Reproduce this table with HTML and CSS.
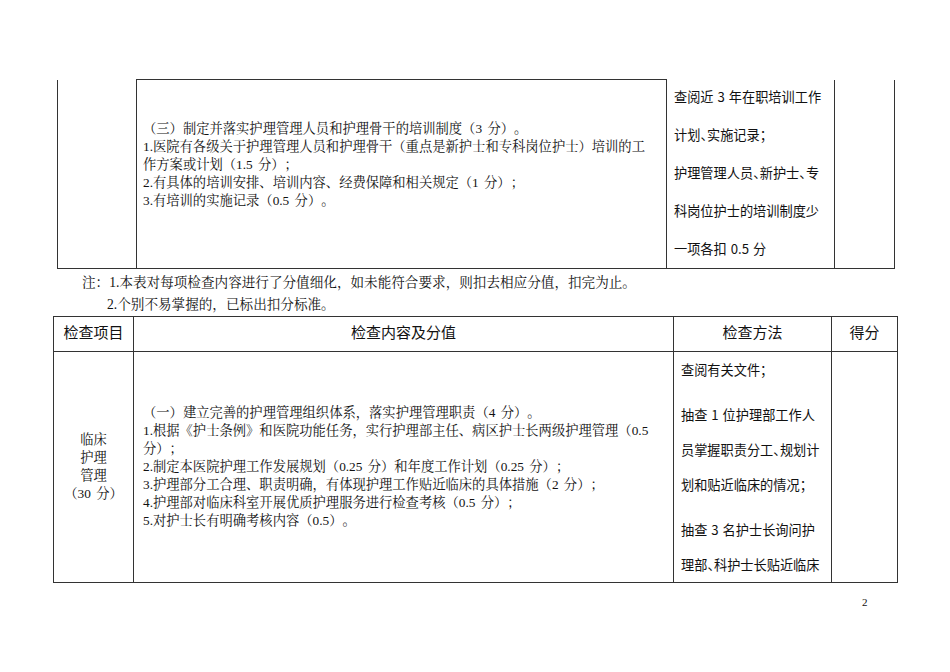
FILE: index.html
```html
<!DOCTYPE html>
<html lang="zh-CN">
<head>
<meta charset="utf-8">
<title>护理管理检查表</title>
<link rel="stylesheet" href="styles.css">
</head>
<body>
<div class="page">
  <table class="tbl tbl-top">
    <colgroup>
      <col class="c1a"><col class="c2a"><col class="c3a"><col class="c4a">
    </colgroup>
    <tr class="row-top">
      <td class="cell-item"></td>
      <td class="cell-content content-top">
        <div class="ln">（三）制定并落实护理管理人员和护理骨干的培训制度（3 分）。</div>
        <div class="ln">1.医院有各级关于护理管理人员和护理骨干（重点是新护士和专科岗位护士）培训的工</div>
        <div class="ln">作方案或计划（1.5 分）；</div>
        <div class="ln">2.有具体的培训安排、培训内容、经费保障和相关规定（1 分）；</div>
        <div class="ln">3.有培训的实施记录（0.5 分）。</div>
      </td>
      <td class="cell-method method-top">
        <div class="mln">查阅近 3 年在职培训工作</div>
        <div class="mln">计划<span class="hw">、</span>实施记录；</div>
        <div class="mln">护理管理人员<span class="hw">、</span>新护士<span class="hw">、</span>专</div>
        <div class="mln">科岗位护士的培训制度少</div>
        <div class="mln">一项各扣 0.5 分</div>
      </td>
      <td class="cell-score"></td>
    </tr>
  </table>

  <div class="notes">
    <div class="note">注：1.本表对每项检查内容进行了分值细化，如未能符合要求，则扣去相应分值，扣完为止。</div>
    <div class="note note2">2.个别不易掌握的，已标出扣分标准。</div>
  </div>

  <table class="tbl tbl-bottom">
    <colgroup>
      <col class="c1b"><col class="c2b"><col class="c3b"><col class="c4b">
    </colgroup>
    <tr class="row-head">
      <th>检查项目</th>
      <th>检查内容及分值</th>
      <th>检查方法</th>
      <th>得分</th>
    </tr>
    <tr class="row-body">
      <td class="cell-item item-bottom">
        <div class="ln">临床</div>
        <div class="ln">护理</div>
        <div class="ln">管理</div>
        <div class="ln">（30 分）</div>
      </td>
      <td class="cell-content content-bottom">
        <div class="ln">（一）建立完善的护理管理组织体系，落实护理管理职责（4 分）。</div>
        <div class="ln">1.根据《护士条例》和医院功能任务，实行护理部主任、病区护士长两级护理管理（0.5</div>
        <div class="ln">分）；</div>
        <div class="ln">2.制定本医院护理工作发展规划（0.25 分）和年度工作计划（0.25 分）；</div>
        <div class="ln">3.护理部分工合理、职责明确，有体现护理工作贴近临床的具体措施（2 分）；</div>
        <div class="ln">4.护理部对临床科室开展优质护理服务进行检查考核（0.5 分）；</div>
        <div class="ln">5.对护士长有明确考核内容（0.5）。</div>
      </td>
      <td class="cell-method method-bottom">
        <div class="para">
          <div class="mln2">查阅有关文件；</div>
        </div>
        <div class="para">
          <div class="mln2">抽查 1 位护理部工作人</div>
          <div class="mln2">员掌握职责分工<span class="hw">、</span>规划计</div>
          <div class="mln2">划和贴近临床的情况；</div>
        </div>
        <div class="para">
          <div class="mln2">抽查 3 名护士长询问护</div>
          <div class="mln2">理部<span class="hw">、</span>科护士长贴近临床</div>
        </div>
      </td>
      <td class="cell-score"></td>
    </tr>
  </table>

  <div class="pagenum">2</div>
</div>
</body>
</html>
```

FILE: styles.css
```css
html, body {
  margin: 0;
  padding: 0;
  background: #ffffff;
}

body {
  font-family: "Liberation Serif", "Noto Serif CJK SC", "Noto Sans CJK SC", serif;
  color: #111111;
  width: 950px;
  height: 672px;
  overflow: hidden;
  text-spacing-trim: space-all;
}

.page {
  padding-top: 79px;
}

.tbl {
  border-collapse: collapse;
  table-layout: fixed;
}

.tbl td,
.tbl th {
  border: 1px solid #333333;
  padding: 0;
}

/* top table (continued from previous page) */
.tbl-top {
  margin-left: 57px;
  width: 837px;
}
.c1a { width: 79px; }
.c2a { width: 530px; }
.c3a { width: 168px; }
.c4a { width: 60px; }

.tbl-top td {
  border-top: none;
}
.tbl-top td.content-top {
  border-top: 1px solid #333333;
}

.row-top {
  height: 187px;
}

.cell-content {
  vertical-align: top;
  font-size: 13.3px;
  line-height: 18px;
  white-space: nowrap;
  word-spacing: 2px;
}

.content-top {
  padding: 40px 0 0 6px !important;
}

.cell-method {
  vertical-align: top;
  font-family: "Noto Sans CJK SC", "Liberation Sans", sans-serif;
  font-size: 13.2px;
  white-space: nowrap;
  word-spacing: 1px;
  color: #111111;
}

.hw {
  font-feature-settings: "halt";
}

.method-top {
  padding: 0 0 0 7px !important;
}

.method-top .mln:first-child {
  margin-top: -2px;
}

.mln {
  line-height: 38px;
}

/* notes */
.notes {
  margin-top: 3px;
  font-size: 13.6px;
  line-height: 22px;
  white-space: nowrap;
}
.note {
  padding-left: 82px;
}
.note2 {
  padding-left: 107px;
}

/* bottom table */
.tbl-bottom {
  margin-top: 0;
  margin-left: 53px;
  width: 844px;
}
.c1b { width: 80px; }
.c2b { width: 540px; }
.c3b { width: 158px; }
.c4b { width: 66px; }

.row-head {
  height: 35px;
}
.row-head th {
  font-family: "Noto Sans CJK SC", "Liberation Sans", sans-serif;
  font-weight: normal;
  font-size: 15px;
  text-align: center;
  vertical-align: middle;
  padding-bottom: 4px;
  color: #111111;
}

.row-body {
  height: 231px;
}

.item-bottom {
  vertical-align: middle;
  text-align: center;
  font-size: 13.3px;
  line-height: 18px;
  word-spacing: 2px;
}

.content-bottom {
  vertical-align: middle;
  padding: 0 0 0 9px !important;
}

.method-bottom {
  padding: 0 0 0 7px !important;
}

.para + .para {
  margin-top: 10px;
}

.mln2 {
  line-height: 35px;
}

.cell-score {
  vertical-align: top;
}

.pagenum {
  margin-left: 862px;
  margin-top: 12px;
  font-size: 11px;
  line-height: 14px;
}
```
